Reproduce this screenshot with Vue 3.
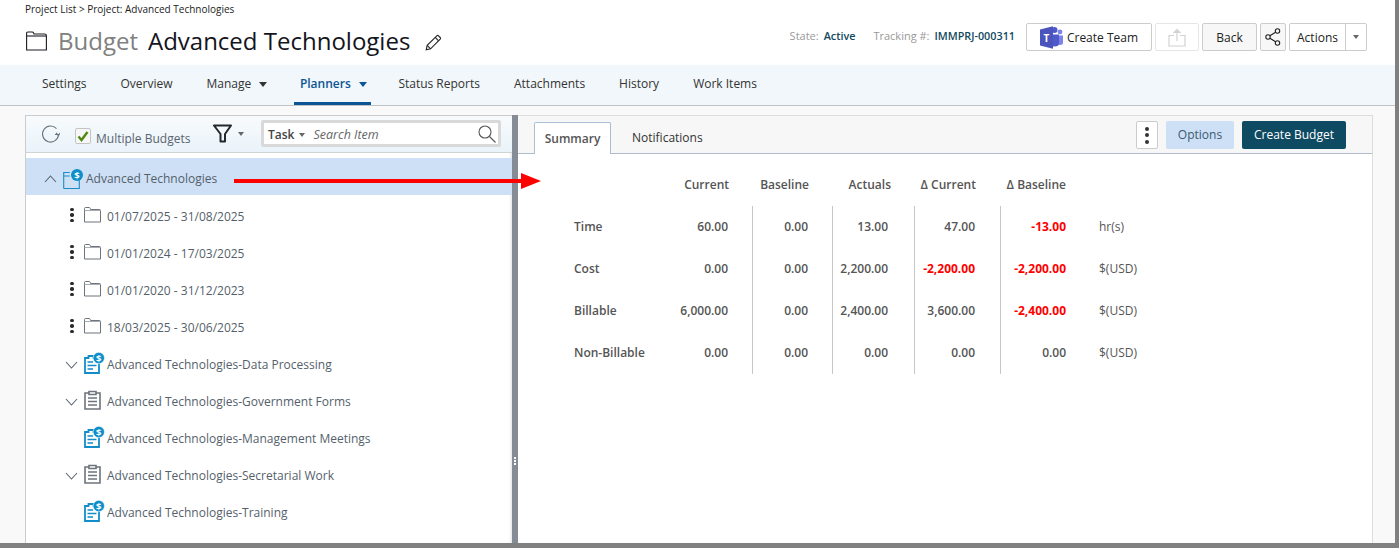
<script setup>
const navItems = [
  { label: 'Settings' },
  { label: 'Overview' },
  { label: 'Manage', caret: true },
  { label: 'Planners', caret: true, active: true },
  { label: 'Status Reports' },
  { label: 'Attachments' },
  { label: 'History' },
  { label: 'Work Items' }
]

// kind: folder = dated period, budget = blue icon, task = grey clipboard
const treeRows = [
  { label: '01/07/2025 - 31/08/2025', kind: 'folder' },
  { label: '01/01/2024 - 17/03/2025', kind: 'folder' },
  { label: '01/01/2020 - 31/12/2023', kind: 'folder' },
  { label: '18/03/2025 - 30/06/2025', kind: 'folder' },
  { label: 'Advanced Technologies-Data Processing', kind: 'budget', chevron: true },
  { label: 'Advanced Technologies-Government Forms', kind: 'task', chevron: true },
  { label: 'Advanced Technologies-Management Meetings', kind: 'budget' },
  { label: 'Advanced Technologies-Secretarial Work', kind: 'task', chevron: true },
  { label: 'Advanced Technologies-Training', kind: 'budget' }
]

const summary = [
  { name: 'Time', values: ['60.00', '0.00', '13.00', '47.00', '-13.00'], unit: 'hr(s)' },
  { name: 'Cost', values: ['0.00', '0.00', '2,200.00', '-2,200.00', '-2,200.00'], unit: '$(USD)' },
  { name: 'Billable', values: ['6,000.00', '0.00', '2,400.00', '3,600.00', '-2,400.00'], unit: '$(USD)' },
  { name: 'Non-Billable', values: ['0.00', '0.00', '0.00', '0.00', '0.00'], unit: '$(USD)' }
]

const columns = ['Current', 'Baseline', 'Actuals', 'Δ Current', 'Δ Baseline']
</script>

<template>
  <div class="page">
    <header class="top">
      <div class="top-left">
        <div class="crumbs">Project List &gt; Project: Advanced Technologies</div>
        <div class="title-row">
          <svg class="title-folder" width="21" height="20" viewBox="0 0 21 20" fill="none" stroke="#1c1c24" stroke-width="1.1">
            <path d="M.6 19V2.2Q.6 1 1.8 1h4.4q1 0 1.4 1l.4 1h10.6q1.8 0 1.8 1.8V19z" />
            <path d="M.6 5h19.8" />
          </svg>
          <span class="title-kind">Budget</span>
          <span class="title-name">Advanced Technologies</span>
          <svg class="pencil" width="17" height="17" viewBox="0 0 17 17" fill="none" stroke="#222" stroke-width="1.1">
            <path d="M1.2 15.8l1-4.4L11.8 1.8q.9-.8 1.7 0l1.7 1.7q.8.8 0 1.7l-9.6 9.6z" />
            <path d="M10.2 3.4l3.4 3.4M2.2 11.4l3.4 3.4" />
          </svg>
        </div>
      </div>
      <div class="top-right">
        <span class="meta-label">State:</span>
        <span class="meta-value state-value">Active</span>
        <span class="meta-label">Tracking #:</span>
        <span class="meta-value">IMMPRJ-000311</span>
        <button class="btn teams-btn">
          <svg width="24" height="23" viewBox="0 0 24 23">
            <circle cx="20" cy="6" r="2.4" fill="#7b83eb" />
            <path d="M17 9.500h6v7q0 2.500-3 2.500t-3-2.500z" fill="#7b83eb" />
            <circle cx="14.500" cy="4" r="3" fill="#5059c9" />
            <path d="M10 8.500h9v9q0 3-4.500 3t-4.500-3z" fill="#5059c9" />
            <path d="M0 3.500l13-3.200v22.400L0 19.500z" fill="#4b53bc" />
            <text x="6.400" y="15.500" class="teams-t">T</text>
          </svg>
          Create Team
        </button>
        <button class="btn upload-btn">
          <svg width="18" height="19" viewBox="0 0 18 19" fill="none" stroke="#d2d2d2" stroke-width="1.200">
            <path d="M6 7.500H1v10.500h16V7.500h-5" />
            <path d="M9 13V2" />
            <path d="M5.500 5L9 1.500 12.500 5" fill="#d2d2d2" />
          </svg>
        </button>
        <button class="btn back-btn">Back</button>
        <button class="btn share-btn">
          <svg width="16" height="18" viewBox="0 0 16 18" fill="none" stroke="#222" stroke-width="1.100">
            <circle cx="12.500" cy="3" r="2.200" />
            <circle cx="3" cy="9" r="2.200" />
            <circle cx="12.500" cy="15" r="2.200" />
            <path d="M4.900 7.800l5.700-3.600M4.900 10.200l5.700 3.600" />
          </svg>
        </button>
        <div class="split-btn">
          <span class="split-label">Actions</span>
          <span class="split-caret"><i class="caret caret-grey"></i></span>
        </div>
      </div>
    </header>

    <nav class="nav">
      <a v-for="item in navItems" :key="item.label" class="nav-item" :class="{ active: item.active }">
        {{ item.label }}
        <i v-if="item.caret" class="caret nav-caret"></i>
      </a>
    </nav>

    <main class="body">
      <section class="left">
        <div class="left-tools">
          <svg class="refresh" width="19" height="19" viewBox="0 0 19 19" fill="none" stroke="#6b7480" stroke-width="1.100">
            <path d="M15.500 3.700A8 8 0 1 0 17.500 10" />
            <path d="M14 9.500l3.500 0M15 8l2.500 2.500L19 8" />
          </svg>
          <span class="check">
            <svg width="12" height="11" viewBox="0 0 12 11" fill="none" stroke="#4f8a10" stroke-width="2.400">
              <path d="M1.500 5.500l3 3.500 6-8" />
            </svg>
          </span>
          <span class="check-label">Multiple Budgets</span>
          <svg class="funnel" width="19" height="19" viewBox="0 0 19 19" fill="none" stroke="#22282e" stroke-width="2">
            <path d="M1 1.500h17l-6 8.500v7.500H7.500V10z" stroke-linejoin="round" />
          </svg>
          <i class="caret caret-grey funnel-caret"></i>
          <div class="search">
            <span class="search-type">Task</span>
            <i class="caret caret-grey search-caret"></i>
            <span class="search-hint">Search Item</span>
            <svg class="search-icon" width="18" height="18" viewBox="0 0 18 18" fill="none" stroke="#555" stroke-width="1.100">
              <circle cx="7" cy="7" r="6" />
              <path d="M11.500 11.500l6 6" />
            </svg>
          </div>
        </div>

        <div class="tree">
          <div class="tree-root">
            <svg class="chev-up" width="13" height="8" viewBox="0 0 13 8" fill="none" stroke="#5a6470" stroke-width="1.100">
              <path d="M1 7l5.500-6L12 7" />
            </svg>
            <svg class="root-icon" width="20" height="20" viewBox="0 0 20 20" fill="none">
              <path d="M.7 19.500V3.500h6M.7 19.500h15.600V11M.7 7h6" stroke="#1a8cc6" stroke-width="1.100" />
              <circle cx="14" cy="6" r="6" fill="#0f8fc9" />
              <text x="14" y="9.800" class="dollar">$</text>
            </svg>
            <span>Advanced Technologies</span>
          </div>

          <div v-for="row in treeRows" :key="row.label" class="tree-row">
            <span class="row-lead">
              <span v-if="row.kind === 'folder'" class="dots"><i></i><i></i><i></i></span>
              <svg v-else-if="row.chevron" width="13" height="8" viewBox="0 0 13 8" fill="none" stroke="#5a6470" stroke-width="1.100">
                <path d="M1 1l5.500 6L12 1" />
              </svg>
            </span>
            <svg v-if="row.kind === 'folder'" class="row-icon folder-icon" width="17" height="16" viewBox="0 0 17 16" fill="none" stroke="#6d747d" stroke-width="1">
              <path d="M.5 15V1.500Q.5 .5 1.500 .5h3.500q.8 0 1.200 .8L6.500 2.500h9q1 0 1 1V15z" />
              <path d="M.5 3.500h16" stroke="#a8adb3" />
            </svg>
            <svg v-else-if="row.kind === 'budget'" class="row-icon budget-icon" width="21" height="22" viewBox="0 0 21 22" fill="none">
              <path d="M1 6h3.500V4h5v2H15v15H1z" fill="#fff" stroke="#118dc9" stroke-width="1.800" />
              <path d="M3.500 10h5.500M3.500 13.500h9M3.500 17h5.500" stroke="#118dc9" stroke-width="1.500" />
              <circle cx="14.800" cy="6" r="5.700" fill="#0f8fc9" stroke="#fff" stroke-width=".6" />
              <text x="14.800" y="9.700" class="dollar">$</text>
            </svg>
            <svg v-else class="row-icon task-icon" width="17" height="20" viewBox="0 0 17 20" fill="none" stroke="#6d747d" stroke-width="1.600">
              <path d="M5 3H1v16h15V3h-4" />
              <path d="M5 4.500V1.500h7v3z" />
              <path d="M4 8h9M4 11.500h9M4 15h9" stroke-width="1.300" />
            </svg>
            <span>{{ row.label }}</span>
          </div>
        </div>
      </section>

      <div class="splitter"><i></i><i></i><i></i></div>

      <section class="right">
        <div class="tabs">
          <span class="tab tab-on">Summary</span>
          <span class="tab">Notifications</span>
          <button class="more"><i></i><i></i><i></i></button>
          <button class="options">Options</button>
          <button class="create">Create Budget</button>
        </div>
        <table class="summary">
          <thead>
            <tr>
              <th class="name-col"></th>
              <th v-for="col in columns" :key="col">{{ col }}</th>
              <th></th>
            </tr>
          </thead>
          <tbody>
            <tr v-for="row in summary" :key="row.name">
              <td class="name-col">{{ row.name }}</td>
              <td v-for="(val, i) in row.values" :key="i" :class="{ neg: val.startsWith('-') }">{{ val }}</td>
              <td class="unit">{{ row.unit }}</td>
            </tr>
          </tbody>
        </table>
      </section>
    </main>

    <!-- red annotation arrow drawn on top of the screenshot -->
    <div class="arrow"><span class="arrow-line"></span><span class="arrow-head"></span></div>
  </div>
</template>

<style>
html, body {
  margin: 0;
  background: #fff;
}
</style>

<style scoped>
.page {
  position: relative;
  box-sizing: border-box;
  width: 1399px;
  height: 548px;
  overflow: hidden;
  display: flex;
  flex-direction: column;
  border-right: 4px solid #808080;
  border-bottom: 5px solid #808080;
  font-family: "Open Sans", sans-serif;
  font-size: 12px;
  color: #555;
  background: #fff;
}

button {
  font-family: inherit;
  cursor: pointer;
}

.top {
  height: 65px;
  flex: none;
  display: flex;
  justify-content: space-between;
  padding-left: 25px;
}

.crumbs {
  font-size: 10px;
  line-height: 14px;
  color: #222;
  margin-top: 2px;
}

.title-row {
  display: flex;
  align-items: center;
  height: 36px;
  margin-top: 6px;
  white-space: nowrap;
}

.title-folder {
  margin: 2px 11px 0 1px;
}

.title-kind {
  font-size: 24px;
  color: #808080;
  margin-right: 10px;
}

.title-name {
  font-size: 24px;
  color: #14141c;
}

.pencil {
  margin: 5px 0 0 15px;
}

.top-right {
  display: flex;
  align-items: flex-start;
  padding: 23px 28px 0 0;
  white-space: nowrap;
}

.meta-label,
.meta-value {
  font-size: 11px;
  line-height: 26px;
}

.meta-label {
  color: #999;
  margin-right: 5px;
}

.meta-value {
  font-size: 10.800px;
  font-weight: 600;
  color: #12495f;
}

.state-value {
  margin-right: 18px;
}

.btn {
  box-sizing: border-box;
  height: 28px;
  border: 1px solid #ccc;
  border-radius: 2px;
  background: #fff;
  padding: 0;
  font-size: 12px;
  color: #222;
  display: flex;
  align-items: center;
  justify-content: center;
}

.teams-btn {
  width: 126px;
  margin: 0 3px 0 11px;
  gap: 3px;
}

.teams-t {
  font: 700 10px "Open Sans", sans-serif;
  fill: #fff;
  text-anchor: middle;
}

.upload-btn {
  width: 44px;
  border-color: #e6e6e6;
  margin-right: 3px;
}

.back-btn {
  width: 55px;
  background: #f7f7f7;
  margin-right: 3px;
}

.share-btn {
  width: 26px;
  background: #f7f7f7;
  margin-right: 3px;
}

.split-btn {
  box-sizing: border-box;
  height: 28px;
  width: 78px;
  display: flex;
  border: 1px solid #ccc;
  border-radius: 2px;
  color: #222;
  line-height: 27px;
}

.split-label {
  flex: 1;
  text-align: center;
}

.split-caret {
  width: 20px;
  border-left: 1px solid #ccc;
  display: flex;
  align-items: center;
  justify-content: center;
}

.caret {
  display: inline-block;
  width: 0;
  height: 0;
  border-left: 4px solid transparent;
  border-right: 4px solid transparent;
  border-top: 5px solid #333;
}

.caret-grey {
  border-left-width: 3.500px;
  border-right-width: 3.500px;
  border-top: 4px solid #666;
}

.nav {
  height: 41px;
  flex: none;
  box-sizing: border-box;
  display: flex;
  gap: 34px;
  padding-left: 42px;
  background: #f1f7fa;
  border-bottom: 1px solid #bfc3c6;
  box-shadow: 0 1px 2px rgba(0, 0, 0, .08);
}

.nav-item {
  position: relative;
  line-height: 37px;
  color: #333;
  white-space: nowrap;
}

.nav-caret {
  margin: 0 -1.500px 0 5px;
  vertical-align: 1px;
}

.nav-item.active {
  font-weight: 600;
  color: #0b5596;
}

.nav-item.active .nav-caret {
  margin-right: -2.500px;
  border-top-color: #0b5596;
}

/* underline is wider than the label */
.nav-item.active::after {
  content: "";
  position: absolute;
  left: -6px;
  right: -7px;
  bottom: 0;
  height: 3px;
  background: #0b5596;
}

.body {
  flex: 1;
  min-height: 0;
  display: flex;
  padding: 9px 22px 0 25px;
  background: #f9f9f9;
}

.left {
  box-sizing: border-box;
  width: 487px;
  flex: none;
  background: #fff;
  border: 1px solid #ccc;
  border-width: 1px 0 0 1px;
  box-shadow: inset -3px 0 3px -2px rgba(0, 0, 0, .12);
}

.left-tools {
  box-sizing: border-box;
  height: 37px;
  display: flex;
  align-items: center;
  padding-left: 15px;
  background: linear-gradient(#f8fbfd, #e9f3f9);
  border-bottom: 1px solid #cfd3d6;
}

.check {
  box-sizing: border-box;
  width: 16px;
  height: 16px;
  margin: 4px 5px 0 15px;
  display: flex;
  align-items: center;
  justify-content: center;
  background: #f7f7f7;
  border: 1px solid #c4c4c4;
  border-radius: 2px;
}

.check-label {
  margin-top: 8px;
  width: 117px;
  color: #5a6470;
  white-space: nowrap;
}

.funnel {
  margin-top: -2px;
}

.funnel-caret {
  margin-left: 6px;
}

.search {
  box-sizing: border-box;
  width: 240px;
  height: 27px;
  margin: -1px 0 0 17px;
  display: flex;
  align-items: center;
  padding: 1px 2px 0 4px;
  background: #fff;
  border: 3px solid #d9d9d9;
  border-radius: 2px;
}

.search-type {
  font-weight: 600;
  color: #444;
}

.search-caret {
  margin: 1px 0 0 5px;
}

.search-hint {
  margin-left: 8px;
  font-size: 12.500px;
  font-style: italic;
  color: #666;
}

.search-icon {
  margin-left: auto;
}

.tree {
  padding-top: 5px;
}

.tree-root,
.tree-row {
  box-sizing: border-box;
  display: flex;
  align-items: center;
  height: 37px;
  white-space: nowrap;
  color: #555f6b;
}

.tree-root {
  background: #cde0f5;
  padding: 4px 0 0 18px;
}

.chev-up {
  margin-right: 6px;
}

.root-icon {
  margin-right: 3px;
}

.dollar {
  font: 700 9.500px "Open Sans", sans-serif;
  fill: #fff;
  text-anchor: middle;
}

.tree-row {
  padding: 6px 0 0 39px;
}

.row-lead {
  width: 19px;
  display: flex;
  align-items: center;
}

.dots {
  margin: 0 0 3px 5px;
  display: flex;
  flex-direction: column;
  gap: 2px;
}

.dots i {
  display: block;
  width: 3.500px;
  height: 3.500px;
  border-radius: 50%;
  background: #2a2a2a;
}

.row-icon {
  flex: none;
}

.folder-icon {
  margin: -3px 6px 0 0;
}

.budget-icon {
  margin: -4px 2px 0 0;
}

.task-icon {
  margin: -3px 6px 0 0;
}

.splitter {
  width: 6px;
  flex: none;
  background: #858c96;
  display: flex;
  flex-direction: column;
  align-items: center;
  justify-content: flex-end;
  gap: 1px;
  padding-bottom: 78px;
  box-sizing: border-box;
}

.splitter i {
  width: 2px;
  height: 2px;
  background: #fff;
}

.right {
  width: 855px;
  flex: none;
  background: #fff;
  border: solid #ddd;
  border-width: 1px 1px 0 0;
  box-sizing: border-box;
}

.tabs {
  box-sizing: border-box;
  height: 38px;
  display: flex;
  align-items: flex-end;
  padding-left: 16px;
  background: #f7f7f7;
  border-bottom: 1px solid #b0bccb;
  position: relative;
}

.tab {
  height: 31px;
  line-height: 31px;
  padding: 0 21px;
  color: #333;
  white-space: nowrap;
}

.tab-on {
  box-sizing: border-box;
  width: 77px;
  padding: 0;
  text-align: center;
  font-weight: 600;
  color: #555;
  background: #fff;
  border: 1px solid #a9bfd8;
  border-bottom: none;
  margin-bottom: -1px;
  height: 32px;
  border-radius: 2px 2px 0 0;
}

.more,
.options,
.create {
  align-self: flex-start;
  margin-top: 5px;
  padding: 0 0 2px;
  font-size: 12px;
  border-radius: 2px;
}

.more {
  box-sizing: border-box;
  width: 22px;
  height: 28px;
  margin-left: auto;
  margin-right: 8px;
  display: flex;
  flex-direction: column;
  align-items: center;
  justify-content: center;
  gap: 2.500px;
  background: #fff;
  border: 1px solid #ccc;
  padding: 0;
}

.more i {
  width: 4px;
  height: 4px;
  border-radius: 50%;
  background: #333;
}

.options {
  width: 68px;
  height: 28px;
  margin-right: 8px;
  border: none;
  background: #cde0f5;
  color: #3a5a72;
}

.create {
  width: 104px;
  height: 28px;
  margin-right: 26px;
  border: none;
  background: #0f4a63;
  color: #fff;
}

.summary {
  border-collapse: separate;
  border-spacing: 0;
  margin: 10px 0 0 56px;
  table-layout: fixed;
  width: 640px;
  font-weight: 600;
  color: #555;
}

.summary th,
.summary td {
  height: 42px;
  padding: 0 24px 2px 0;
  text-align: right;
  white-space: nowrap;
  font-weight: 600;
  box-sizing: border-box;
}

.summary td {
  border-right: 1px solid #c6c6c6;
}

.summary th:nth-child(1),
.summary td:nth-child(1) {
  width: 68px;
  padding: 0 0 2px;
  text-align: left;
  border: none;
}

/* column edges and text ends do not line up evenly in the original */
.summary th:nth-child(2) { width: 111px; }
.summary th:nth-child(3) { width: 80px; }
.summary th:nth-child(4) { width: 82px; }
.summary td:nth-child(4) { padding-right: 26px; }
.summary th:nth-child(5) { width: 86px; padding-right: 25px; }
.summary td:nth-child(5) { padding-right: 25px; }
.summary th:nth-child(6) { width: 89px; }

.summary td:nth-child(6) {
  border: none;
}

.summary td.neg {
  color: #f00;
  font-weight: 700;
}

.summary td.unit {
  border: none;
  padding: 0 0 2px 9px;
  text-align: left;
  font-weight: 400;
}

.arrow {
  position: absolute;
  left: 234px;
  top: 172px;
  display: flex;
  align-items: center;
  height: 17px;
}

.arrow-line {
  width: 287px;
  height: 4px;
  background: #f00;
}

.arrow-head {
  width: 0;
  height: 0;
  border-top: 8.500px solid transparent;
  border-bottom: 8.500px solid transparent;
  border-left: 20px solid #f00;
}
</style>
